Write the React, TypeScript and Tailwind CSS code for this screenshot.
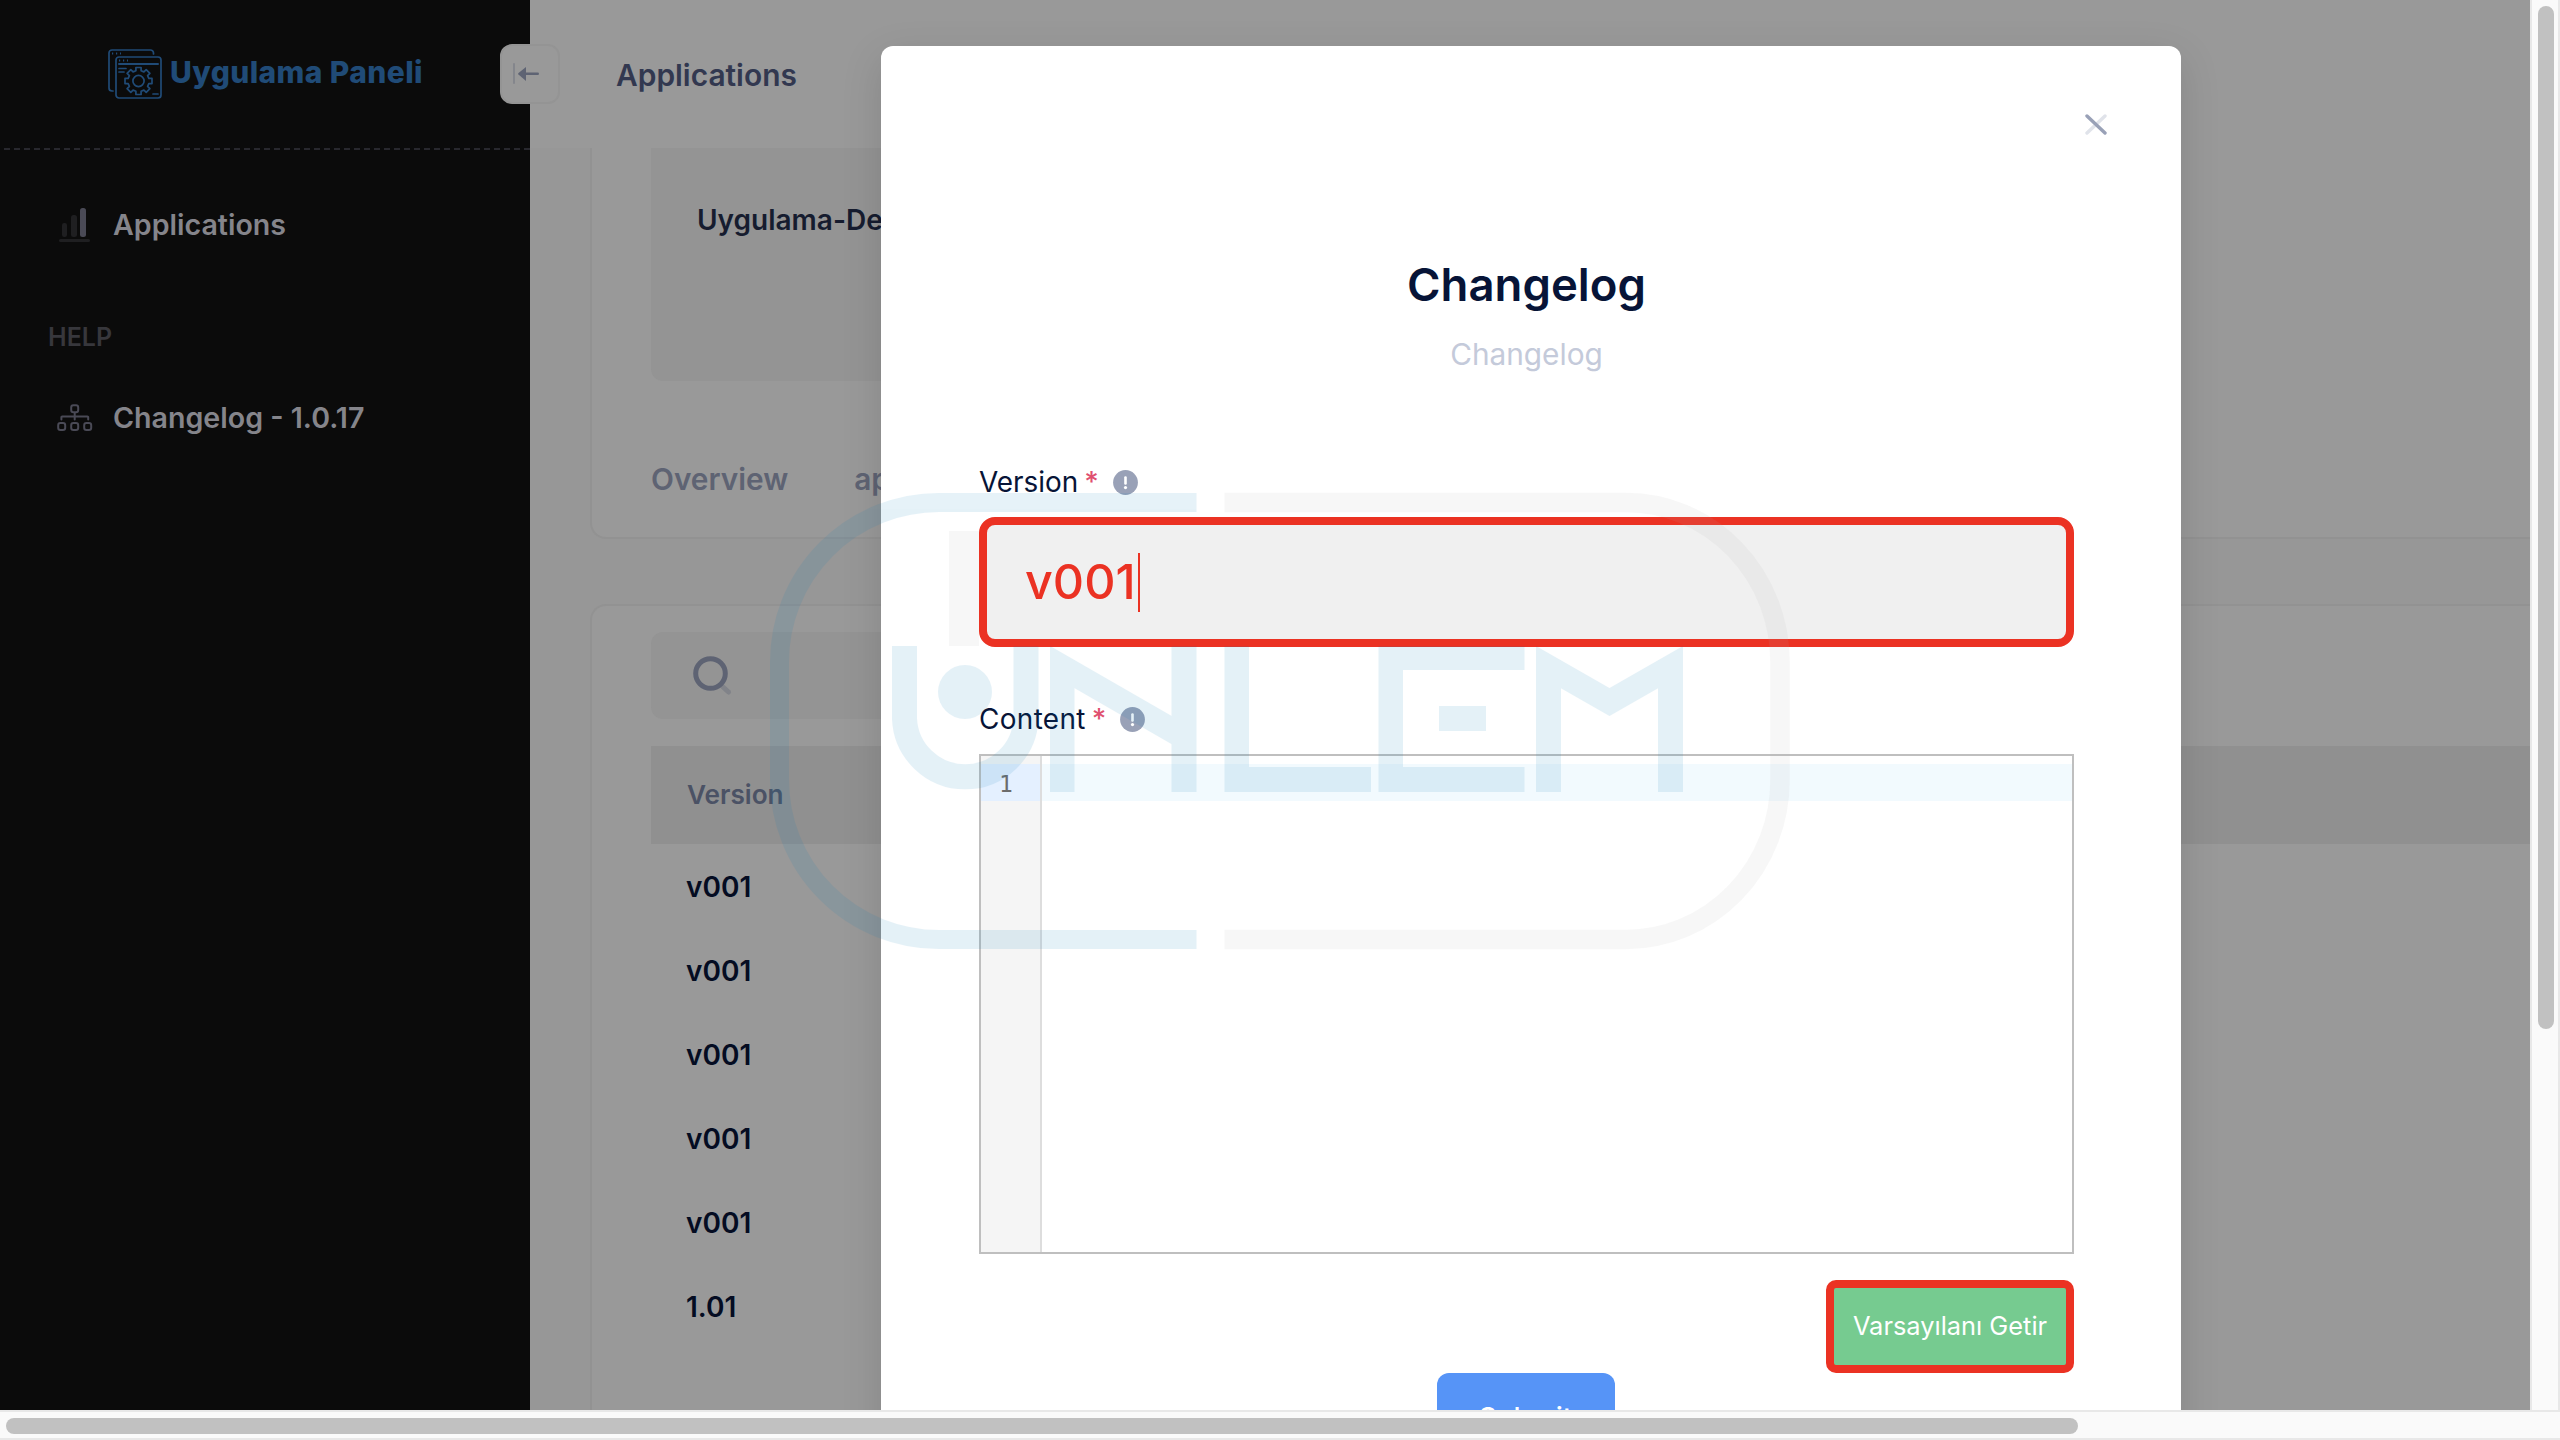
import React from "react";

const rows = ["v001", "v001", "v001", "v001", "v001", "1.01"];

function LogoIcon() {
  return (
    <svg className="h-[50px] w-[54px] shrink-0" viewBox="0 0 54 50" fill="none" stroke="currentColor" strokeWidth="1.7" strokeLinecap="round" strokeLinejoin="round">
      <path d="M45.5 5V4a3 3 0 0 0-3-3H4a3 3 0 0 0-3 3v35a3 3 0 0 0 3 3h1" />
      <rect x="8" y="8" width="45" height="41" rx="3" />
      <path d="M11 15H50" strokeWidth="2" />
      <path d="M4 4.5H13M11 11.5H20" strokeWidth="2" strokeDasharray="1.2 2.8" strokeLinecap="butt" />
      <path d="M11 19.5H18M11 23H16M45 45H50" />
      <g transform="translate(30.5 32)">
        <circle r="5.6" />
        <path d="M-2.6-13.5H2.6V-10.3L5.4-9.1L7.7-11.4L11.4-7.7L9.1-5.4L10.3-2.6H13.5V2.6H10.3L9.1 5.4L11.4 7.7L7.7 11.4L5.4 9.1L2.6 10.3V13.5H-2.6V10.3L-5.4 9.1L-7.7 11.4L-11.4 7.7L-9.1 5.4L-10.3 2.6H-13.5V-2.6H-10.3L-9.1-5.4L-11.4-7.7L-7.7-11.4L-5.4-9.1L-2.6-10.3Z" />
      </g>
    </svg>
  );
}

function BarsIcon() {
  return (
    <svg className="h-[34px] w-[36px]" viewBox="0 0 36 34">
      <rect x="5" y="15" width="5" height="14" rx="2.2" fill="#1f1f21" />
      <rect x="14" y="7" width="6" height="22" rx="2.5" fill="#1f1f21" />
      <rect x="23" y="0" width="6" height="29" rx="2.5" fill="#4a4a56" />
      <rect x="2" y="31" width="31" height="3" rx="1.5" fill="#1f1f21" />
    </svg>
  );
}

function SitemapIcon() {
  return (
    <svg className="h-[28px] w-[36px]" viewBox="0 0 36 28" fill="none" stroke="#4a4a56" strokeWidth="2" strokeLinecap="round">
      <rect x="14.2" y="1.2" width="7" height="7" rx="2.2" />
      <rect x="1.2" y="19" width="7" height="7" rx="2.2" />
      <rect x="14.2" y="19" width="7" height="7" rx="2.2" />
      <rect x="27.2" y="19" width="7" height="7" rx="2.2" />
      <path d="M17.7 9V15.5M4.4 15.5V13.3a.8.8 0 0 1 .8-.8H30.4a.8.8 0 0 1 .8.8V15.5" />
    </svg>
  );
}

function Sidebar() {
  return (
    <aside className="flex w-[530px] shrink-0 flex-col bg-[#0b0b0b]">
      <div className="flex h-[148px] items-center pl-[108px] text-[#204b77]">
        <LogoIcon />
        <span className="ml-[8px] -mt-[5px] text-[30px] font-extrabold leading-[40px] tracking-[0.4px] whitespace-nowrap">Uygulama Paneli</span>
      </div>
      <div className="h-[2px] bg-[repeating-linear-gradient(90deg,transparent_0px,transparent_4px,#28282e_4px,#28282e_10px)]" />
      <nav className="flex flex-col pt-[45px] font-semibold text-[#85858b]">
        <a className="flex h-[60px] items-center pl-[57px] text-[28.6px]">
          <BarsIcon />
          <span className="ml-[20px]">Applications</span>
        </a>
        <div className="mt-[53px] flex h-[60px] items-center pl-[48px] text-[25px] text-[#37373c]">HELP</div>
        <a className="mt-[20px] flex h-[60px] items-center pl-[57px] text-[28.6px]">
          <SitemapIcon />
          <span className="ml-[20px] whitespace-nowrap">Changelog - 1.0.17</span>
        </a>
      </nav>
    </aside>
  );
}

function Page() {
  return (
    <main className="flex min-w-0 flex-1 flex-col bg-[#979797] font-semibold">
      <header className="flex h-[148px] shrink-0 items-center bg-[#999999] pl-[86px]">
        <h1 className="mt-px text-[29.9px] leading-[40px] text-[#323850]">Applications</h1>
      </header>
      <section className="ml-[60px] flex h-[391px] shrink-0 flex-col rounded-bl-[16px] border-b-2 border-l-2 border-[#929292] bg-[#999999] pl-[59px]">
        <div className="h-[233px] w-[600px] rounded-b-[12px] bg-[#949494] pt-[52px] pl-[46px] text-[28px] leading-[40px] text-[#161c2f]">
          Uygulama-Demo
        </div>
        <div className="mt-[78px] flex gap-[66px] text-[29.8px] leading-[40px] text-[#5e6373]">
          <span>Overview</span>
          <span>api</span>
        </div>
      </section>
      <section className="mt-[65px] ml-[60px] flex flex-1 flex-col rounded-tl-[16px] border-t-2 border-l-2 border-[#929292] bg-[#999999] pl-[59px]">
        <div className="mt-[26px] flex h-[87px] w-[500px] items-center rounded-[12px] bg-[#949494] pl-[42px]">
          <svg className="h-[40px] w-[40px]" viewBox="0 0 40 40" fill="none" strokeLinecap="round">
            <path d="M30 31L35.5 36" stroke="#818389" strokeWidth="5" />
            <circle cx="17.5" cy="17.5" r="14.8" stroke="#5e6373" strokeWidth="5" />
          </svg>
        </div>
        <div className="mt-[27px] flex h-[98px] items-center bg-[#909090] pb-px pl-[36px] text-[26.2px] text-[#4b5265]">Version</div>
        <div className="pt-px text-[28px] text-[#040c22]">
          {rows.map((r, i) => (
            <div key={i} className="flex h-[84px] items-center pl-[35px]">
              {r}
            </div>
          ))}
        </div>
      </section>
    </main>
  );
}

function Label({ children, className = "" }: { children: string; className?: string }) {
  return (
    <label className="flex items-center text-[27.9px] leading-[40px] text-[#071437]">
      <span className={className}>{children}</span>
      <span className="ml-[6px] font-medium text-[#e0506f]">*</span>
      <svg className="ml-[14px] h-[25px] w-[25px]" viewBox="0 0 25 25">
        <circle cx="12.5" cy="12.5" r="12.4" fill="#99a1b7" />
        <rect x="11.2" y="6.3" width="2.6" height="8.5" rx="1.2" fill="#fff" />
        <circle cx="12.5" cy="17.6" r="1.6" fill="#fff" />
      </svg>
    </label>
  );
}

function Modal() {
  return (
    <div className="absolute top-[46px] left-[881px] flex h-[1500px] w-[1300px] flex-col rounded-[12px] bg-white px-[98px] pr-[107px] shadow-[0_12px_40px_rgba(0,0,0,0.13)]">
      <div className="-mr-[34px] flex h-[158px] justify-end pt-[68px]">
        <svg className="h-[21px] w-[24px]" viewBox="0 0 24 21" fill="none" strokeWidth="3.4" strokeLinecap="round">
          <path d="M21 2L3 19" stroke="#e0e3ea" />
          <path d="M3 2L21 19" stroke="#99a1b7" />
        </svg>
      </div>
      <h2 className="mt-[51px] text-center text-[45.5px] leading-[60px] font-semibold text-[#071437]">Changelog</h2>
      <p className="mt-[19px] text-center text-[29.8px] leading-[40px] text-[#c4cada]">Changelog</p>
      <div className="mt-[88px]">
        <Label>Version</Label>
      </div>
      <div className="mt-[15px] flex h-[130px] w-[1095px] items-center rounded-[16px] border-8 border-[#eb3223] bg-[#f0f0f0] pl-[38px] text-[48.5px] font-medium text-[#eb3223]">
        <span className="mt-px">v001</span>
        <span className="ml-[2px] h-[59px] w-[2px] bg-[#eb3223]" />
      </div>
      <div className="mt-[52px]">
        <Label className="tracking-[0.35px]">Content</Label>
      </div>
      <div className="mt-[15px] flex h-[500px] w-[1095px] shrink-0 border-2 border-[#bfbfbf]">
        <div className="w-[61px] border-r-2 border-[#dddddd] bg-[#f5f5f5] pt-[8px]">
          <div className="flex h-[37px] items-center bg-[#e4f0ff] pt-[3px] pl-[18px] font-['DejaVu_Sans_Mono'] text-[23px] text-[#6c6c6c]">1</div>
        </div>
        <div className="flex-1 pt-[8px]">
          <div className="h-[37px] bg-[#f2fafe]" />
        </div>
      </div>
      <div className="mt-[26px] flex justify-end">
        <button className="h-[93px] w-[248px] rounded-[10px] border-8 border-[#eb3223] bg-[#76cb90] text-[25.4px] whitespace-nowrap text-white">Varsayılanı Getir</button>
      </div>
      <div className="flex justify-center">
        <button className="mr-[2px] h-[86px] w-[178px] rounded-[12px] bg-[#5694f7] pt-[3px] text-[28px] font-medium text-white">Submit</button>
      </div>
    </div>
  );
}

/* Translucent brand mark laid over the whole screen. */
function Watermark() {
  return (
    <svg className="pointer-events-none absolute top-0 left-0 h-[1440px] w-[2560px]" viewBox="0 0 2560 1440" fill="none">
      <defs>
        <clipPath id="bandA"><rect x="1050" y="646" width="146.5" height="146" /></clipPath>
        <clipPath id="bandB"><rect x="1536" y="646" width="147" height="146" /></clipPath>
      </defs>
      <g opacity="0.1" stroke="#057db9">
        <path d="M1196.5 502.5H939A159.5 159.5 0 0 0 779.5 662V780A159.5 159.5 0 0 0 939 939.5H1196.5" strokeWidth="19" />
        <path d="M904.5 646V718.5A60.8 60.8 0 0 0 1026 718.5V646" strokeWidth="25" />
        <g stroke="none" fill="#057db9">
          <circle cx="965" cy="692" r="27" />
          <rect x="1050" y="660" width="24.5" height="132" />
          <rect x="1171.5" y="646" width="25" height="146" />
          <rect x="1224.5" y="646" width="24.5" height="146" />
          <rect x="1249" y="767" width="122" height="25" />
          <rect x="1378.5" y="646" width="24.5" height="146" />
          <rect x="1403" y="646" width="121.5" height="24" />
          <rect x="1403" y="767" width="121.5" height="25" />
          <rect x="1439" y="706" width="47" height="25" />
          <rect x="1536" y="660" width="25" height="132" />
          <rect x="1658" y="660" width="25" height="132" />
        </g>
        <line x1="1015.4" y1="640" x2="1190" y2="740.6" strokeWidth="24.3" clipPath="url(#bandA)" />
        <polyline points="1501,640 1609.5,702 1718,640" strokeWidth="24.3" clipPath="url(#bandB)" />
      </g>
      <g opacity="0.1">
        <path d="M1224.5 502.5H1626A154 159.5 0 0 1 1780 662V780A154 159.5 0 0 1 1626 939.5H1224.5" stroke="#afafaf" strokeWidth="19.5" />
        <rect x="949" y="531" width="30" height="115" fill="#afafaf" />
      </g>
    </svg>
  );
}

export default function App() {
  return (
    <div className="relative flex h-[1440px] w-[2560px] flex-col overflow-hidden bg-[#fafafa] font-['Inter',sans-serif]">
      <div className="flex h-[1410px]">
        <div className="relative flex h-[1410px] w-[2530px] shrink-0 overflow-hidden">
          <Sidebar />
          <Page />
          <div className="absolute top-[44px] left-[500px] flex h-[60px] w-[60px] items-center rounded-[12px] border-2 border-[#949494] bg-[#999999] pl-[10px]">
            <svg className="h-[24px] w-[30px]" viewBox="0 0 30 24">
              <rect x="1" y="1" width="2" height="21" rx="1" fill="#84868c" />
              <path d="M14 5V19L6.5 12.6Q5.6 11.8 6.5 11Z" fill="#5e6373" />
              <rect x="12" y="10.4" width="15" height="2.6" rx="1.3" fill="#5e6373" />
            </svg>
          </div>
          <Modal />
        </div>
        <div className="w-[30px] border-x-2 border-[#e8e8e8] bg-[#fafafa] pt-[6px] pl-[6px]">
          <div className="h-[1023px] w-[16px] rounded-full bg-[#c1c1c1]" />
        </div>
      </div>
      <div className="h-[30px] border-y-2 border-[#e8e8e8] bg-[#fafafa] pt-[6px] pl-[6px]">
        <div className="h-[16px] w-[2072px] rounded-full bg-[#c1c1c1]" />
      </div>
      <Watermark />
    </div>
  );
}
